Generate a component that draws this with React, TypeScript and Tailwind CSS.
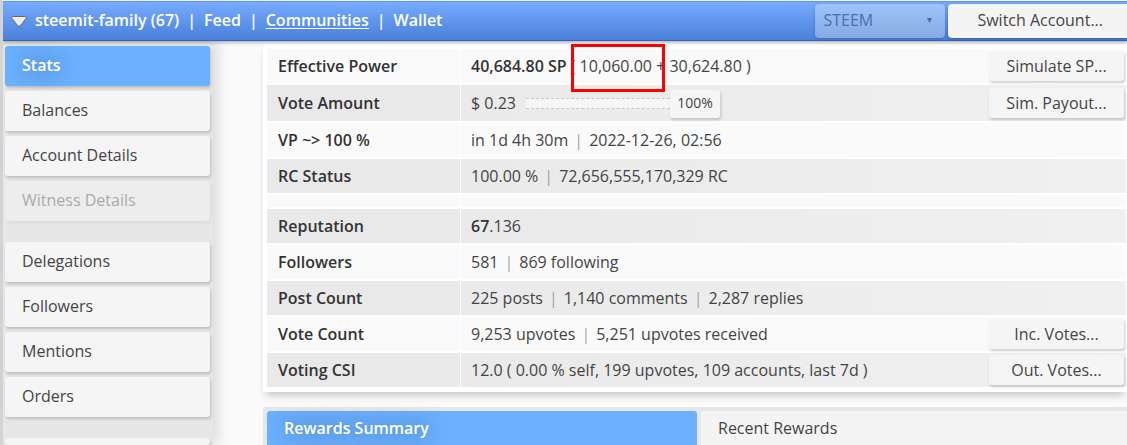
import type { ReactNode } from "react"
import { clsx } from "clsx"

const NAV_LINKS = [
  { label: "steemit-family (67)", active: false },
  { label: "Feed", active: false },
  { label: "Communities", active: true },
  { label: "Wallet", active: false },
]

const MENU_GROUPS = [
  ["Stats", "Balances", "Account Details", "Witness Details"],
  ["Delegations", "Followers", "Mentions", "Orders"],
]

function Sep() {
  return <span className="mx-[6px] text-[#a89f9f]">|</span>
}

function Header() {
  return (
    <header className="relative z-20 mt-px flex h-10 items-center border-t border-b border-t-[#5b94e8] border-b-[#2f62c4] bg-linear-to-b from-[#76abff] to-[#4a80d8] pl-2 shadow-[0_2px_3px_rgba(0,0,0,0.25)]">
      <svg className="mr-2 h-4 w-4 shrink-0" viewBox="0 0 16 16" aria-hidden="true">
        <path
          d="M2.2 3.5h11.6c1.2 0 1.8 1 1.2 1.9l-5.4 7c-.8 1-2.4 1-3.2 0L1 5.4C.4 4.5 1 3.5 2.2 3.5z"
          fill="#ececec"
          stroke="#666"
        />
      </svg>
      <nav className="flex items-center pb-[2px] font-semibold whitespace-nowrap text-white">
        {NAV_LINKS.map((link, i) => (
          <span key={link.label}>
            {i > 0 && <span className="mx-2">|</span>}
            <a href="#" className={clsx(link.active && "underline underline-offset-2")}>
              {link.label}
            </a>
          </span>
        ))}
      </nav>
      <div className="ml-auto flex gap-[3px]">
        <div className="relative">
          <select
            disabled
            aria-label="Chain"
            className="h-[34px] w-[130px] appearance-none rounded-sm bg-[#f4f4f4]/35 pb-[2px] pl-2 text-[#4a6fae] opacity-100 shadow-[0_1px_3px_rgba(0,0,0,0.2)]"
          >
            <option>STEEM</option>
          </select>
          <svg className="absolute top-[14px] right-[13px] h-[5px] w-[5px]" viewBox="0 0 5 5" aria-hidden="true">
            <path d="M0 0h5L2.5 5z" fill="#456aab" />
          </svg>
        </div>
        <button
          type="button"
          className="h-[34px] rounded-l-sm bg-[#f4f4f4] pr-6 pb-[2px] pl-[29px] whitespace-nowrap shadow-[0_1px_3px_rgba(0,0,0,0.3)]"
        >
          Switch Account...
        </button>
      </div>
    </header>
  )
}

function Sidebar() {
  return (
    <aside className="relative z-10 flex w-[210px] shrink-0 flex-col gap-[21px] bg-[#e7e7e7] pt-[5px] pr-[3px] pl-[2px] shadow-[4px_0_14px_rgba(0,0,0,0.14)]">
      {MENU_GROUPS.map((group) => (
        <div key={group[0]} className="flex flex-col gap-[5px]">
          {group.map((item) => (
            <button
              key={item}
              type="button"
              disabled={item === "Witness Details"}
              className={clsx(
                "h-10 rounded-[3px] px-[17px] pb-[3px] text-left disabled:opacity-100",
                item === "Stats" &&
                  "bg-[#6bb1ff] font-semibold text-white shadow-[1px_2px_3px_rgba(0,0,0,0.18)] [text-shadow:0_0_20px_rgba(0,0,0,0.5)]",
                item === "Witness Details" && "bg-[#ededed] text-[#aaa] shadow-[1px_2px_3px_rgba(0,0,0,0.06)]",
                item !== "Stats" && item !== "Witness Details" && "bg-[#f5f5f5] shadow-[1px_2px_3px_rgba(0,0,0,0.18)]",
              )}
            >
              {item}
            </button>
          ))}
        </div>
      ))}
      <div className="h-10 rounded-[3px] bg-[#f5f5f5] shadow-[1px_2px_3px_rgba(0,0,0,0.18)]" />
    </aside>
  )
}

function VoteSlider() {
  return (
    <span className="relative flex">
      <input
        type="range"
        min={0}
        max={100}
        defaultValue={100}
        aria-label="Vote weight"
        className="h-7 w-[194px] appearance-none bg-transparent [&::-webkit-slider-runnable-track]:h-[11px] [&::-webkit-slider-runnable-track]:border-x-0 [&::-webkit-slider-runnable-track]:border-y [&::-webkit-slider-runnable-track]:border-dashed [&::-webkit-slider-runnable-track]:border-[#c8c8c8] [&::-webkit-slider-runnable-track]:bg-[#f6f6f6] [&::-webkit-slider-thumb]:-mt-[9px] [&::-webkit-slider-thumb]:h-7 [&::-webkit-slider-thumb]:w-[50px] [&::-webkit-slider-thumb]:appearance-none [&::-webkit-slider-thumb]:rounded-[3px] [&::-webkit-slider-thumb]:border-0 [&::-webkit-slider-thumb]:bg-[#f5f5f5] [&::-webkit-slider-thumb]:shadow-[1px_2px_3px_rgba(0,0,0,0.18)]"
      />
      <span className="pointer-events-none absolute inset-y-0 right-0 w-[50px] text-center text-sm leading-7">
        100%
      </span>
    </span>
  )
}

type Row = { label: string; value: ReactNode; action?: string }

const ROWS: (Row | null)[] = [
  {
    label: "Effective Power",
    value: (
      <span>
        <b className="font-semibold text-[#333]">40,684.80 SP</b> ({" "}
        <span className="relative">
          10,060.00
          <span className="absolute -top-[11px] -right-[13px] -bottom-[15px] -left-[9px] border-3 border-[#f00]" />
        </span>{" "}
        + 30,624.80 )
      </span>
    ),
    action: "Simulate SP...",
  },
  {
    label: "Vote Amount",
    value: (
      <span className="flex items-center gap-[10px]">
        $ 0.23
        <VoteSlider />
      </span>
    ),
    action: "Sim. Payout...",
  },
  { label: "VP ~> 100 %", value: <span>in 1d 4h 30m<Sep />2022-12-26, 02:56</span> },
  { label: "RC Status", value: <span>100.00 %<Sep />72,656,555,170,329 RC</span> },
  null,
  { label: "Reputation", value: <span><b className="font-semibold text-[#333]">67</b>.136</span> },
  { label: "Followers", value: <span>581<Sep />869 following</span> },
  { label: "Post Count", value: <span>225 posts<Sep />1,140 comments<Sep />2,287 replies</span> },
  { label: "Vote Count", value: <span>9,253 upvotes<Sep />5,251 upvotes received</span>, action: "Inc. Votes..." },
  {
    label: "Voting CSI",
    value: "12.0 ( 0.00 % self, 199 upvotes, 109 accounts, last 7d )",
    action: "Out. Votes...",
  },
]

function StatsTable() {
  return (
    <div className="bg-white py-[3px] pl-[3px] shadow-[0_6px_8px_-3px_rgba(0,0,0,0.22)]">
      <table className="w-full border-separate border-spacing-x-px border-spacing-y-[2px]">
        <tbody>
          {ROWS.map((row, i) => {
            const dark = i % 2 === 1
            if (!row) {
              return (
                <tr key={i} className="h-3 bg-[#fafafa]">
                  <td className="p-0" />
                  <td className="p-0" />
                </tr>
              )
            }
            return (
              <tr key={i} className={row.label === "Vote Amount" ? "h-9" : "h-[34px]"}>
                <th
                  scope="row"
                  className={clsx(
                    "w-[193px] p-0 pl-[11px] text-left font-semibold text-[#333]",
                    dark ? "bg-[#e9e9e9]" : "bg-[#fafafa]",
                  )}
                >
                  {row.label}
                </th>
                <td
                  className={clsx(
                    "p-0 pr-[2px] pl-[10px]",
                    dark ? "bg-linear-to-r from-[#eaeaea] to-[#f0f0f0]" : "bg-[#fafafa]",
                  )}
                >
                  <div className="flex items-center justify-between whitespace-nowrap">
                    {row.value}
                    {row.action && (
                      <button
                        type="button"
                        className="h-[30px] w-[135px] rounded-[3px] bg-[#f5f5f5] shadow-[1px_2px_3px_rgba(0,0,0,0.18)]"
                      >
                        {row.action}
                      </button>
                    )}
                  </div>
                </td>
              </tr>
            )
          })}
        </tbody>
      </table>
    </div>
  )
}

function RewardTabs() {
  return (
    <div className="mt-[15px] -mr-1 flex gap-1 bg-[#e7e7e7] pt-1 pl-1">
      <button
        type="button"
        className="h-10 w-1/2 rounded-[3px] bg-[#6bb1ff] px-[17px] pb-[7px] text-left font-semibold text-white [text-shadow:0_0_20px_rgba(0,0,0,0.5)]"
      >
        Rewards Summary
      </button>
      <button type="button" className="h-10 w-1/2 rounded-l-[3px] bg-[#f4f4f4] px-[17px] pb-[7px] text-left">
        Recent Rewards
      </button>
    </div>
  )
}

export default function App() {
  return (
    <div className="flex h-screen flex-col overflow-hidden border-l-3 border-[#d3d3d3] bg-[#fafafa] font-['Open_Sans',sans-serif] text-base leading-6 text-[#444]">
      <Header />
      <div className="flex min-h-0 flex-1">
        <Sidebar />
        <main className="ml-[50px] min-w-0 flex-1 pt-[3px]">
          <StatsTable />
          <RewardTabs />
        </main>
      </div>
    </div>
  )
}
